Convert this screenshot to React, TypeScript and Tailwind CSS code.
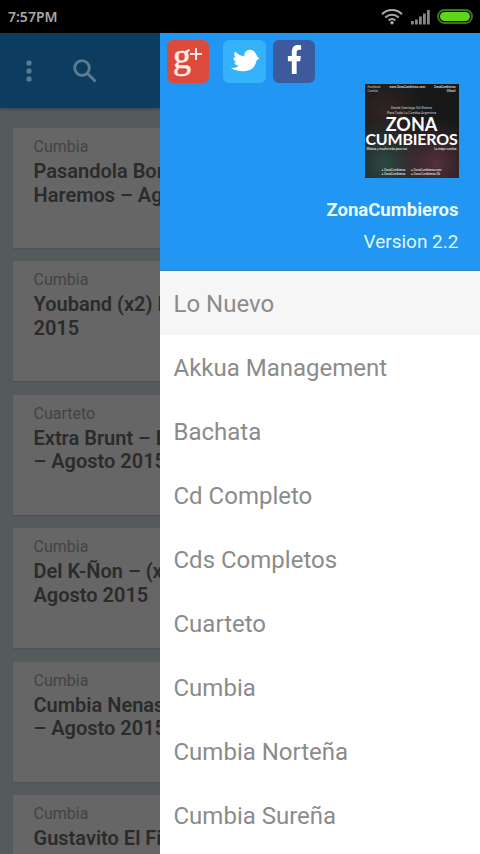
import { FaFacebookF } from "react-icons/fa";

const posts = [
  { tag: "Cumbia", lines: ["Pasandola Bomba", "Haremos – Agosto"] },
  { tag: "Cumbia", lines: ["Youband (x2) E", "2015"] },
  { tag: "Cuarteto", lines: ["Extra Brunt – E", "– Agosto 2015"] },
  { tag: "Cumbia", lines: ["Del K-Ñon – (x2)", "Agosto 2015"] },
  { tag: "Cumbia", lines: ["Cumbia Nenas", "– Agosto 2015"] },
  { tag: "Cumbia", lines: ["Gustavito El Fi"] },
];

const menu = [
  "Lo Nuevo",
  "Akkua Management",
  "Bachata",
  "Cd Completo",
  "Cds Completos",
  "Cuarteto",
  "Cumbia",
  "Cumbia Norteña",
  "Cumbia Sureña",
];

function StatusBar() {
  return (
    <header className="flex h-[33px] shrink-0 items-center justify-between bg-black pl-2 pr-[7px]">
      <span className="font-['Noto_Sans','Open_Sans',sans-serif] text-[14px] font-semibold leading-none text-[#a8a8a8]">
        7:57PM
      </span>
      <div className="flex items-center">
        <svg width="22" height="17" viewBox="0 0 22 17" fill="none" stroke="#a6a6a6" strokeWidth="2">
          <path d="M1 6.2C6.5.6 15.500.6 21 6.200" />
          <path d="M4.300 9.500c3.800-3.700 9.600-3.700 13.400 0" />
          <path d="M7.600 12.600c2-1.800 4.800-1.800 6.800 0" />
          <circle cx="11" cy="14.800" r="1.800" fill="#a6a6a6" stroke="none" />
        </svg>
        <svg className="ml-[8px]" width="19" height="16" viewBox="0 0 19 16" fill="#858585">
          <path d="M0 12h2.800v3.500H0zM4 10.500h2.800v5H4zM8 7.500h2.800v8H8zM12 4.500h2.800v11H12zM16 1h2.800v14.500H16z" />
        </svg>
        <div className="ml-[7px] h-[15px] w-[36px] rounded-full border-2 border-[#38752b] bg-black p-px">
          <div className="h-full rounded-full bg-[#62d51b]" />
        </div>
      </div>
    </header>
  );
}

function PostList() {
  return (
    <section className="flex w-40 shrink-0 flex-col overflow-hidden bg-[#555a5d]">
      <div className="flex h-[75px] shrink-0 items-center bg-[#0d3c61] shadow-[0_1px_3px_#384249]">
        <svg className="ml-[26px]" width="6" height="22" viewBox="0 0 6 22" fill="#5b7b92">
          <rect x=".5" y=".5" width="5" height="5" rx="1.500" />
          <rect x=".5" y="8.500" width="5" height="5" rx="1.500" />
          <rect x=".5" y="16.500" width="5" height="5" rx="1.500" />
        </svg>
        <svg className="ml-[41px]" width="24" height="24" viewBox="0 0 24 24" fill="none" stroke="#5b7b92" strokeWidth="2.800">
          <circle cx="9" cy="9" r="7.300" />
          <path d="m14.500 14.500 8 8" />
        </svg>
      </div>
      <div className="flex flex-col gap-[13.400px] pl-[13px] pt-5">
        {posts.map((p, i) => (
          <article
            key={i}
            className="h-[120px] shrink-0 overflow-hidden whitespace-nowrap bg-[#666666] pl-[20.500px] pt-[9px] shadow-[0_1px_1px_#505355]"
          >
            <p className="text-[16px] leading-5 text-[#434343]">{p.tag}</p>
            <h2 className="pt-[3px] text-[20px] font-semibold leading-[23.500px] text-[#2b2b2b]">
              {p.lines.map((line) => (
                <span key={line} className="block">{line}</span>
              ))}
            </h2>
          </article>
        ))}
      </div>
    </section>
  );
}

function Cover() {
  return (
    <div className="flex h-[94px] w-[94px] flex-col items-center overflow-hidden bg-[#171919] bg-[radial-gradient(circle_at_75%_85%,#54303a_0%,transparent_42%),radial-gradient(circle_at_20%_85%,#2f4945_0%,transparent_40%),radial-gradient(circle_at_20%_30%,#302522_0%,transparent_40%)] text-white">
      <div className="flex h-[22px] w-full justify-between px-[3px] pt-px text-[3px] leading-[4px] text-[#cccccc]">
        <span>Facebook<br />Cumbia</span>
        <span className="font-bold">www.ZonaCumbieros.com</span>
        <span className="text-right font-bold">ZonaCumbieros<br />Oficial</span>
      </div>
      <p className="text-center text-[3.500px] leading-[4.500px] text-[#d0d0d0]">
        Desde Santiago Del Estero
        <br />
        Para Toda La Cumbia Argentina
      </p>
      <p className="mt-[2px] font-[Lato,sans-serif] text-[18px] font-bold leading-[14px]">ZONA</p>
      <p className="font-[Lato,sans-serif] text-[16px] font-bold leading-[15px] tracking-[-0.200px]">CUMBIEROS</p>
      <p className="mt-px flex w-full justify-between px-0.5 text-[3px] leading-[4px]">
        <span>Música y mucho más para vos</span>
        <span>La mejor cumbia</span>
      </p>
      <div className="mt-auto flex w-full justify-between px-[17px] pb-[2px] text-[3px] leading-[4px]">
        <span>● ZonaCumbieros<br />● ZonaCumbieros</span>
        <span>● ZonaCumbieros.com<br />● Zona.Cumbieros.Ok</span>
      </div>
    </div>
  );
}

function Drawer() {
  return (
    <aside className="flex min-w-0 flex-1 flex-col bg-white">
      <div className="flex h-[238px] shrink-0 flex-col bg-[#2196f3] pt-[7px] shadow-[inset_0_-1px_0_#3785c0]">
        <div className="flex pl-[7px]">
          <div className="flex h-[43px] w-[42px] rounded-[6px] bg-[#dc4a3b] pl-[6px] text-[#ffeae5]">
            <span className="-mt-[3px] font-['Liberation_Serif',serif] text-[36px] leading-[38px] [-webkit-text-stroke:0.600px]">g</span>
            <svg className="-ml-px mt-[8px]" width="12" height="12" viewBox="0 0 12 12" stroke="currentColor" strokeWidth="2">
              <path d="M6 0v12M0 6h12" />
            </svg>
          </div>
          <div className="ml-[14px] h-[43px] w-[43px] rounded-[6px] bg-[#34b3fa]">
            <svg width="43" height="43" viewBox="0 0 43 43" fill="#fff">
              <path d="M12 11.500c3 3 6 4.500 9.300 4.700C21 12.500 23.500 9.800 27 9.800c2.500 0 4.500 1.200 5.500 3.500 1.300 2.300 2 3.700 3.900 5.500-2 .6-3 1.500-3.500 3.700C31.500 28 27 31.200 20.500 31.200c-5 0-9-.8-12.500-3.200 3.500.3 5.500-.3 7.800-1.900-2.300-.5-3.800-1.700-4.600-3.600l2.500-.1c-2-1-3.200-2.600-3.500-4.900l2.400.7c-1.500-2-1.800-4.300-.6-6.700z" />
            </svg>
          </div>
          <div className="ml-[7px] flex h-[43px] w-[42px] justify-center rounded-[6px] bg-[#3d5a9d] pt-[5px] text-white">
            <FaFacebookF size={29} className="scale-x-[0.850]" />
          </div>
        </div>
        <div className="flex flex-col items-end pr-[21.500px] pt-px">
          <Cover />
          <p className="pt-5 text-[18.500px] font-bold leading-6 text-[#e9fcff]">ZonaCumbieros</p>
          <p className="pt-2 text-[19px] leading-6 text-[#e0f8ff]">Version 2.2</p>
        </div>
      </div>
      <nav className="flex flex-col text-[24px] text-[#8b8b8b]">
        {menu.map((m, i) => (
          <a key={m} className={i === 0 ? "h-16 bg-[#f6f6f6] pl-[13.500px] pt-px leading-[64px]" : "h-16 pl-[13.500px] pt-px leading-[64px]"}>
            {m}
          </a>
        ))}
      </nav>
    </aside>
  );
}

export default function App() {
  return (
    <div className="flex h-[854px] w-[480px] flex-col overflow-hidden bg-white font-[Roboto,sans-serif]">
      <StatusBar />
      <main className="flex min-h-0 flex-1">
        <PostList />
        <Drawer />
      </main>
    </div>
  );
}
